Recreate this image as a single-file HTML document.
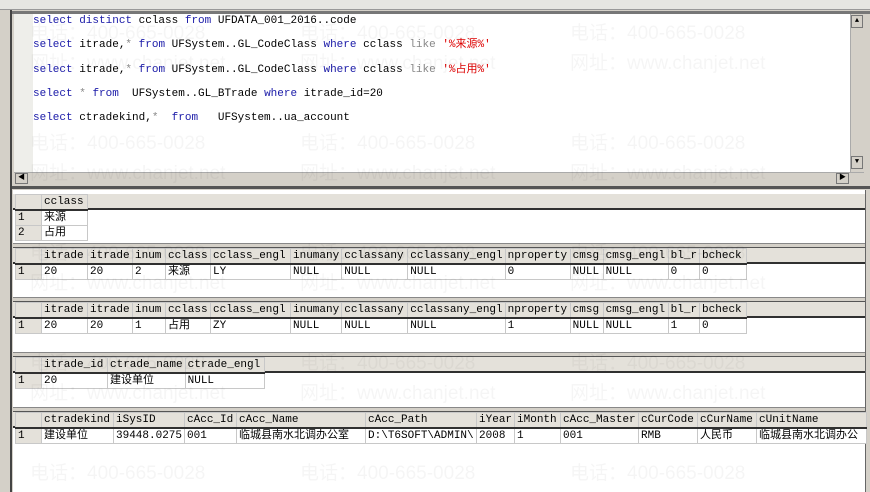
<!DOCTYPE html><html><head><meta charset="utf-8"><style>
*{margin:0;padding:0;box-sizing:border-box}
body{width:870px;height:492px;overflow:hidden;background:#d4d0c8;position:relative;font-family:"Liberation Mono","Noto Sans CJK SC",monospace;font-size:11px}
.a{position:absolute}
.code{left:33px;white-space:pre;color:#000;font-size:11px;line-height:14px}
.k{color:#1a1aa8}.g{color:#888}.r{color:#d00}
.grid{position:absolute;left:15px;border-collapse:collapse;background:#fff}
.grid td{border:1px solid #c8c8c8;height:15px;padding:0 2px;white-space:nowrap;overflow:hidden;line-height:14px;font-size:11px}
.grid tr.h td{background:#e4e1da;border-bottom:2px solid #303030}
.grid td.n{background:#e4e1da;width:26px}
.sep{position:absolute;left:13px;width:852px;height:5px;background:#d4d0c8;border-top:1px solid #888;border-bottom:1px solid #555}
.wm{position:absolute;color:#000;opacity:.035;font-family:"Liberation Sans","Noto Sans CJK SC",sans-serif;font-size:19px;white-space:nowrap;pointer-events:none}
</style></head><body>
<div class="a" style="left:0;top:0;width:870px;height:10px;background:#e6e6e2;border-bottom:1px solid #999"></div>
<div class="a" style="left:10px;top:10px;width:2px;height:482px;background:#444"></div>
<div class="a" style="left:12px;top:11px;width:858px;height:3px;background:#777"></div>
<div class="a" style="left:14px;top:14px;width:19px;height:158px;background:#eeeeea"></div>
<div class="a" style="left:33px;top:14px;width:817px;height:158px;background:#fff"></div>
<div class="a" style="left:850px;top:14px;width:14px;height:158px;background:#d4d0c8;border-left:1px solid #aaa"></div>
<div class="a" style="left:851px;top:15px;width:12px;height:13px;background:#d4d0c8;border:1px solid #777;font-size:7px;text-align:center;line-height:11px">▲</div>
<div class="a" style="left:851px;top:156px;width:12px;height:13px;background:#d4d0c8;border:1px solid #777;font-size:7px;text-align:center;line-height:11px">▼</div>
<div class="a" style="left:14px;top:172px;width:850px;height:12px;background:#d4d0c8;border-top:1px solid #aaa"></div>
<div class="a" style="left:15px;top:173px;width:13px;height:11px;background:#d4d0c8;border:1px solid #777;font-size:7px;text-align:center;line-height:9px">◀</div>
<div class="a" style="left:836px;top:173px;width:13px;height:11px;background:#d4d0c8;border:1px solid #777;font-size:7px;text-align:center;line-height:9px">▶</div>
<div class="a" style="left:12px;top:186px;width:858px;height:3px;background:#555"></div>
<div class="a" style="left:13px;top:190px;width:852px;height:302px;background:#fff"></div>
<div class="a" style="left:865px;top:190px;width:5px;height:302px;background:#d4d0c8;border-left:1px solid #666"></div>

<div class="a code" style="top:14px"><span class="k">select distinct</span> cclass <span class="k">from</span> UFDATA_001_2016..code</div>
<div class="a code" style="top:38px"><span class="k">select</span> itrade,<span class="g">*</span> <span class="k">from</span> UFSystem..GL_CodeClass <span class="k">where</span> cclass <span class="g">like</span> <span class="r">'%来源%'</span></div>
<div class="a code" style="top:63px"><span class="k">select</span> itrade,<span class="g">*</span> <span class="k">from</span> UFSystem..GL_CodeClass <span class="k">where</span> cclass <span class="g">like</span> <span class="r">'%占用%'</span></div>
<div class="a code" style="top:87px"><span class="k">select</span> <span class="g">*</span> <span class="k">from</span>  UFSystem..GL_BTrade <span class="k">where</span> itrade_id=20</div>
<div class="a code" style="top:111px"><span class="k">select</span> ctradekind,<span class="g">*</span>  <span class="k">from</span>   UFSystem..ua_account</div>

<div class="a" style="left:13px;top:194px;width:852px;height:16px;background:#e4e1da;border-bottom:2px solid #303030"></div>
<table class="grid" style="top:194px"><tr class="h"><td class="n"></td><td style="width:46px">cclass</td></tr>
<tr><td class="n">1</td><td>来源</td></tr><tr><td class="n">2</td><td>占用</td></tr></table>

<div class="sep" style="top:243px"></div>
<div class="a" style="left:13px;top:248px;width:852px;height:16px;background:#e4e1da;border-bottom:2px solid #303030"></div>
<table class="grid" style="top:248px"><tr class="h"><td class="n"></td><td style="width:46px">itrade</td><td style="width:45px">itrade</td><td style="width:33px">inum</td><td style="width:45px">cclass</td><td style="width:80px">cclass_engl</td><td style="width:51px">inumany</td><td style="width:66px">cclassany</td><td style="width:97px">cclassany_engl</td><td style="width:65px">nproperty</td><td style="width:33px">cmsg</td><td style="width:65px">cmsg_engl</td><td style="width:31px">bl_r</td><td style="width:47px">bcheck</td></tr>
<tr><td class="n">1</td><td>20</td><td>20</td><td>2</td><td>来源</td><td>LY</td><td>NULL</td><td>NULL</td><td>NULL</td><td>0</td><td>NULL</td><td>NULL</td><td>0</td><td>0</td></tr></table>

<div class="sep" style="top:297px"></div>
<div class="a" style="left:13px;top:302px;width:852px;height:16px;background:#e4e1da;border-bottom:2px solid #303030"></div>
<table class="grid" style="top:302px"><tr class="h"><td class="n"></td><td style="width:46px">itrade</td><td style="width:45px">itrade</td><td style="width:33px">inum</td><td style="width:45px">cclass</td><td style="width:80px">cclass_engl</td><td style="width:51px">inumany</td><td style="width:66px">cclassany</td><td style="width:97px">cclassany_engl</td><td style="width:65px">nproperty</td><td style="width:33px">cmsg</td><td style="width:65px">cmsg_engl</td><td style="width:31px">bl_r</td><td style="width:47px">bcheck</td></tr>
<tr><td class="n">1</td><td>20</td><td>20</td><td>1</td><td>占用</td><td>ZY</td><td>NULL</td><td>NULL</td><td>NULL</td><td>1</td><td>NULL</td><td>NULL</td><td>1</td><td>0</td></tr></table>

<div class="sep" style="top:352px"></div>
<div class="a" style="left:13px;top:357px;width:852px;height:16px;background:#e4e1da;border-bottom:2px solid #303030"></div>
<table class="grid" style="top:357px"><tr class="h"><td class="n"></td><td style="width:66px">itrade_id</td><td style="width:77px">ctrade_name</td><td style="width:79px">ctrade_engl</td></tr>
<tr><td class="n">1</td><td>20</td><td>建设单位</td><td>NULL</td></tr></table>

<div class="sep" style="top:407px"></div>
<div class="a" style="left:13px;top:412px;width:852px;height:16px;background:#e4e1da;border-bottom:2px solid #303030"></div>
<table class="grid" style="top:412px"><tr class="h"><td class="n"></td><td style="width:72px">ctradekind</td><td style="width:71px">iSysID</td><td style="width:52px">cAcc_Id</td><td style="width:129px">cAcc_Name</td><td style="width:111px">cAcc_Path</td><td style="width:38px">iYear</td><td style="width:46px">iMonth</td><td style="width:78px">cAcc_Master</td><td style="width:59px">cCurCode</td><td style="width:59px">cCurName</td><td style="width:110px">cUnitName</td></tr>
<tr><td class="n">1</td><td>建设单位</td><td>39448.0275</td><td>001</td><td>临城县南水北调办公室</td><td>D:\T6SOFT\ADMIN\</td><td>2008</td><td>1</td><td>001</td><td>RMB</td><td>人民币</td><td>临城县南水北调办公</td></tr></table>

<div class="wm" style="left:30px;top:18px">电话：400-665-0028</div><div class="wm" style="left:300px;top:18px">电话：400-665-0028</div><div class="wm" style="left:570px;top:18px">电话：400-665-0028</div>
<div class="wm" style="left:30px;top:48px">网址：www.chanjet.net</div><div class="wm" style="left:300px;top:48px">网址：www.chanjet.net</div><div class="wm" style="left:570px;top:48px">网址：www.chanjet.net</div>
<div class="wm" style="left:30px;top:128px">电话：400-665-0028</div><div class="wm" style="left:300px;top:128px">电话：400-665-0028</div><div class="wm" style="left:570px;top:128px">电话：400-665-0028</div>
<div class="wm" style="left:30px;top:158px">网址：www.chanjet.net</div><div class="wm" style="left:300px;top:158px">网址：www.chanjet.net</div><div class="wm" style="left:570px;top:158px">网址：www.chanjet.net</div>
<div class="wm" style="left:30px;top:238px">电话：400-665-0028</div><div class="wm" style="left:300px;top:238px">电话：400-665-0028</div><div class="wm" style="left:570px;top:238px">电话：400-665-0028</div>
<div class="wm" style="left:30px;top:268px">网址：www.chanjet.net</div><div class="wm" style="left:300px;top:268px">网址：www.chanjet.net</div><div class="wm" style="left:570px;top:268px">网址：www.chanjet.net</div>
<div class="wm" style="left:30px;top:348px">电话：400-665-0028</div><div class="wm" style="left:300px;top:348px">电话：400-665-0028</div><div class="wm" style="left:570px;top:348px">电话：400-665-0028</div>
<div class="wm" style="left:30px;top:378px">网址：www.chanjet.net</div><div class="wm" style="left:300px;top:378px">网址：www.chanjet.net</div><div class="wm" style="left:570px;top:378px">网址：www.chanjet.net</div>
<div class="wm" style="left:30px;top:458px">电话：400-665-0028</div><div class="wm" style="left:300px;top:458px">电话：400-665-0028</div><div class="wm" style="left:570px;top:458px">电话：400-665-0028</div>
</body></html>
